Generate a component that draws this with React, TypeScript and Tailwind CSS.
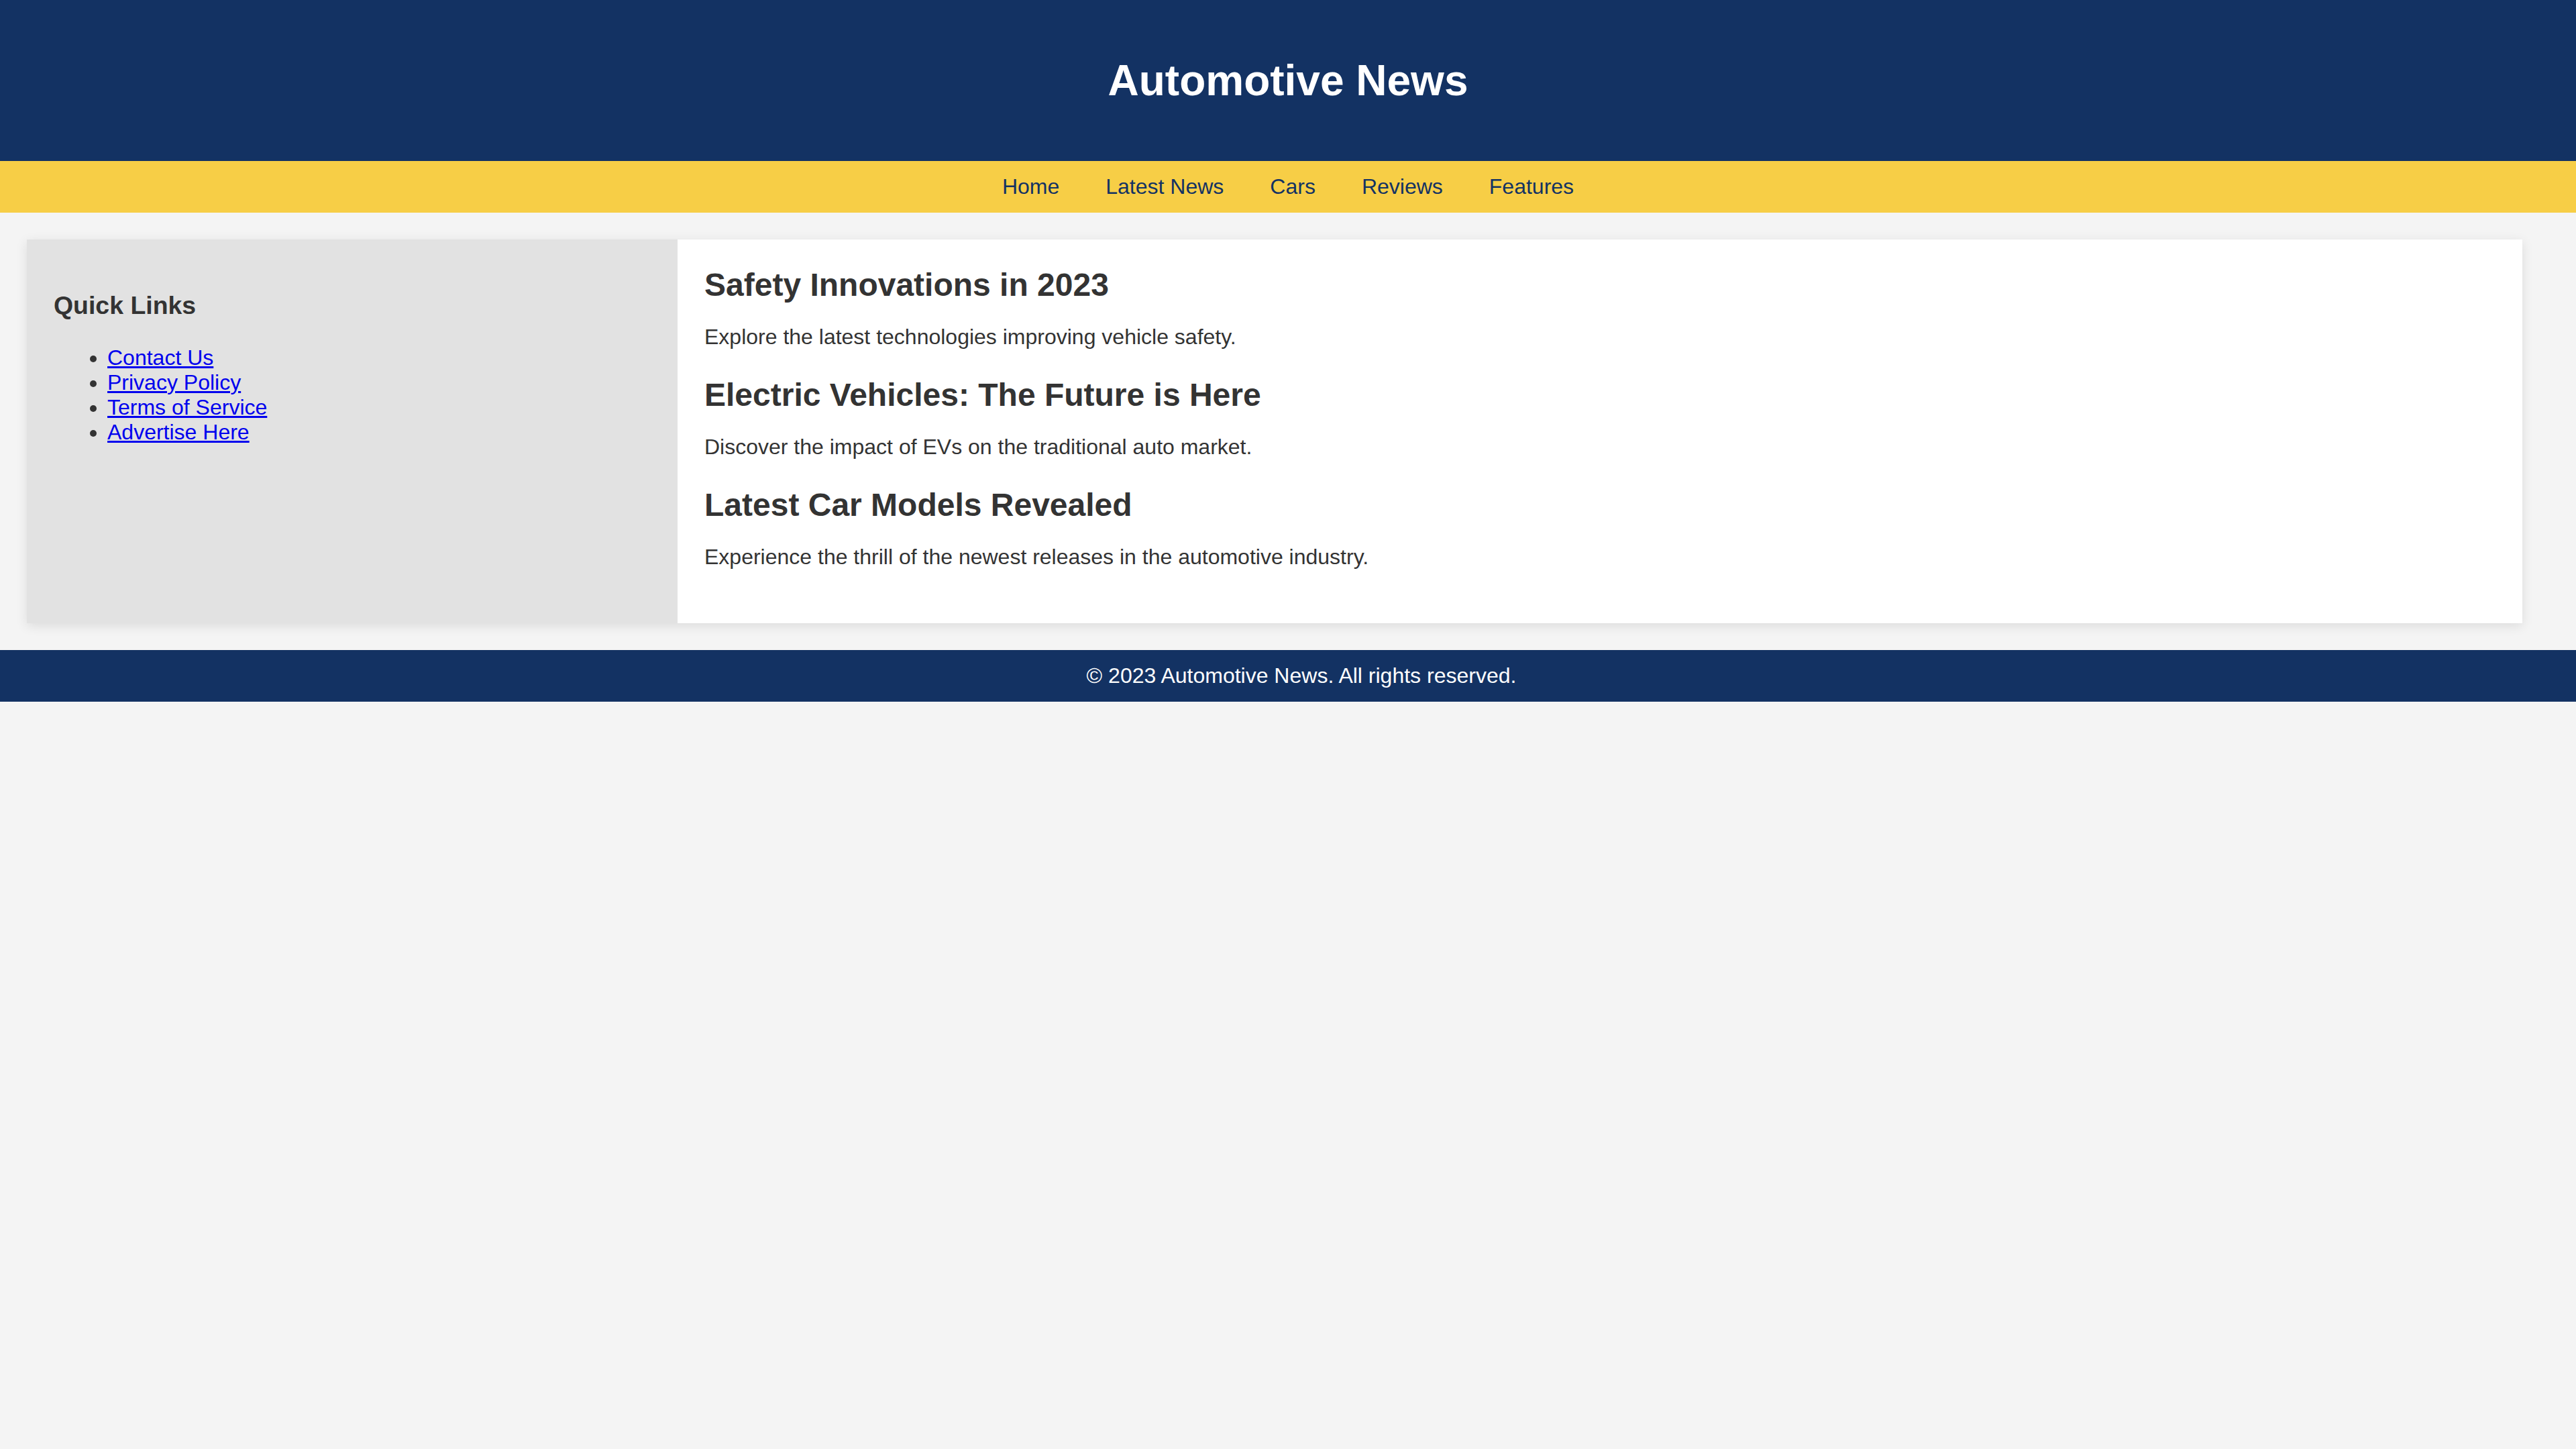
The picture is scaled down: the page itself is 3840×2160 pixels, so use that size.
import React from 'react';

const navLinks = ['Home', 'Latest News', 'Cars', 'Reviews', 'Features'];

const quickLinks = ['Contact Us', 'Privacy Policy', 'Terms of Service', 'Advertise Here'];

const articles = [
    {
        title: 'Safety Innovations in 2023',
        text: 'Explore the latest technologies improving vehicle safety.',
    },
    {
        title: 'Electric Vehicles: The Future is Here',
        text: 'Discover the impact of EVs on the traditional auto market.',
    },
    {
        title: 'Latest Car Models Revealed',
        text: 'Experience the thrill of the newest releases in the automotive industry.',
    },
];

const App: React.FC = () => {
    return (
        <div className="min-h-screen bg-[#f4f4f4] font-['Liberation_Sans',Arial,sans-serif] text-[32px] leading-[normal] text-[#333]">
            {/* Header */}
            <header className="bg-[#133263] py-[40px] text-center text-white">
                <h1 className="my-[42.88px] text-[64px] font-bold leading-[normal]">Automotive News</h1>
            </header>

            {/* Nav */}
            <nav className="bg-[#f7ce46] py-[20px]">
                <ul className="flex justify-center gap-[69px]">
                    {navLinks.map((link) => (
                        <li key={link}>
                            <a href="#" className="text-[#133263]">
                                {link}
                            </a>
                        </li>
                    ))}
                </ul>
            </nav>

            {/* Main */}
            <main className="py-[40px] pl-[40px] pr-[80px]">
                <div className="flex shadow-[0_4px_16px_rgba(0,0,0,0.1)]">
                    <aside className="w-[970px] shrink-0 bg-[#e2e2e2] p-[40px]">
                        <h3 className="my-[37.44px] text-[37.44px] font-bold leading-[normal]">Quick Links</h3>
                        <ul className="my-[32px] list-disc pl-[80px]">
                            {quickLinks.map((link) => (
                                <li key={link}>
                                    <a href="#" className="text-[#0000ee] underline">
                                        {link}
                                    </a>
                                </li>
                            ))}
                        </ul>
                    </aside>

                    <section className="flex-1 bg-white p-[40px]">
                        {articles.map((article) => (
                            <article key={article.title} className="mb-[40px]">
                                <h2 className="m-0 text-[48px] font-bold leading-[normal]">{article.title}</h2>
                                <p className="my-[32px]">{article.text}</p>
                            </article>
                        ))}
                    </section>
                </div>
            </main>

            {/* Footer */}
            <footer className="bg-[#133263] py-[20px] pl-[40px] text-center text-white">
                <p>&copy; 2023 Automotive News. All rights reserved.</p>
            </footer>
        </div>
    );
};

export default App;
